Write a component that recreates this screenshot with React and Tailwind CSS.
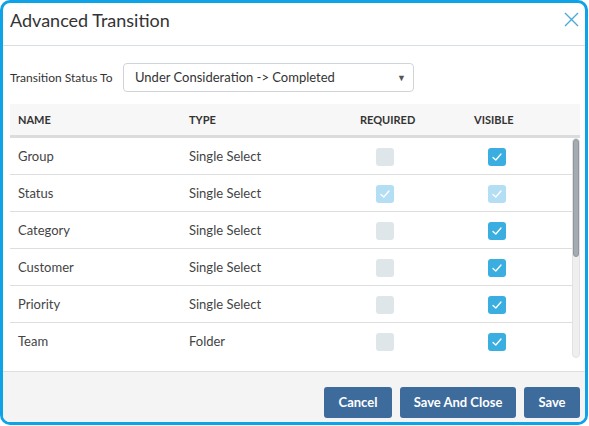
import React from "react";

const fields = [
  { name: "Group", type: "Single Select", required: false, visible: true },
  { name: "Status", type: "Single Select", required: true, visible: true, locked: true },
  { name: "Category", type: "Single Select", required: false, visible: true },
  { name: "Customer", type: "Single Select", required: false, visible: true },
  { name: "Priority", type: "Single Select", required: false, visible: true },
  { name: "Team", type: "Folder", required: false, visible: true },
];

function Check({ checked, locked }) {
  if (!checked) {
    return <span className="block w-[18px] h-[18px] rounded-[3px] bg-[#dfe6e9]" />;
  }
  return (
    <span
      className={`flex items-center justify-center w-[18px] h-[18px] rounded-[3px] ${
        locked ? "bg-[#b3def3]" : "bg-[#3aaee1]"
      }`}
    >
      <svg width="12" height="12" viewBox="0 0 12 12" fill="none">
        <path d="M2 6.4 L4.8 9 L10 3" stroke="white" strokeWidth="1.3" strokeLinecap="round" strokeLinejoin="round" />
      </svg>
    </span>
  );
}

export default function App() {
  return (
    <div
      className="w-[588px] h-[425px] border-[3px] border-[#0ea2e6] rounded-[10px] bg-white flex flex-col overflow-hidden text-[#333]"
      style={{ fontFamily: "Lato, 'Liberation Sans', sans-serif" }}
    >
      {/* Header */}
      <div className="h-[43px] shrink-0 flex items-center justify-between pl-[7px] pr-[6px] border-b border-[#d8dfe3]">
        <h1 className="text-[18px] leading-none text-[#333] -mt-[9px]">Advanced Transition</h1>
        <button className="-mt-[10px]">
          <svg width="15" height="15" viewBox="0 0 15 15" fill="none">
            <path d="M1 1 L14 14 M14 1 L1 14" stroke="#4aa9dd" strokeWidth="1.4" />
          </svg>
        </button>
      </div>

      {/* Body */}
      <div className="flex-1 pl-[7px] pr-[5px] pt-[17px]">
        <div className="flex items-center">
          <label className="text-[12px] w-[113px] text-[#333]">Transition Status To</label>
          <div className="w-[291px] h-[29px] border border-[#cfd4d8] rounded-[4px] flex items-center justify-between pl-[11px] pr-[7px] text-[13px] text-[#333]">
            <span>Under Consideration -&gt; Completed</span>
            <span className="text-[9px] text-[#555]">▼</span>
          </div>
        </div>

        {/* Table */}
        <div className="mt-[12px] w-[570px]">
          <div className="grid grid-cols-[171px_171px_114px_1fr] h-[34px] items-center bg-[#f7f7f7] border-b-[3px] border-[#dcdcdc] text-[11px] font-bold text-[#333] pt-[2px]">
            <span className="pl-[8px]">NAME</span>
            <span className="pl-[8px]">TYPE</span>
            <span className="pl-[8px]">REQUIRED</span>
            <span className="pl-[8px]">VISIBLE</span>
          </div>
          <div className="h-[220px] flex overflow-hidden">
            <div className="w-[562px]">
              {fields.map((f) => (
                <div
                  key={f.name}
                  className="grid grid-cols-[171px_171px_114px_1fr] h-[37px] items-center border-b border-[#dedede] text-[13px] text-[#444] pt-[2px]"
                >
                  <span className="pl-[8px]">{f.name}</span>
                  <span className="pl-[8px]">{f.type}</span>
                  <span className="pl-[24px]">
                    <Check checked={f.required} locked={f.locked} />
                  </span>
                  <span className="pl-[22px]">
                    <Check checked={f.visible} locked={f.locked} />
                  </span>
                </div>
              ))}
            </div>
            {/* scrollbar */}
            <div className="w-[8px] h-full rounded-full bg-[#efefef] border border-[#e2e2e2]">
              <div className="h-[118px] rounded-full bg-[#a4acb2] border border-[#8f989f]" />
            </div>
          </div>
        </div>
      </div>

      {/* Footer */}
      <div className="h-[51px] shrink-0 bg-[#f4f4f4] border-t border-[#dedede] flex items-start justify-end gap-[8px] pt-[15px] pr-[5px]">
        <button className="h-[31px] w-[68px] rounded-[3px] bg-[#3d6b9b] text-white text-[13px] font-bold">Cancel</button>
        <button className="h-[31px] w-[116px] rounded-[3px] bg-[#3d6b9b] text-white text-[13px] font-bold">Save And Close</button>
        <button className="h-[31px] w-[56px] rounded-[3px] bg-[#3d6b9b] text-white text-[13px] font-bold">Save</button>
      </div>
    </div>
  );
}
